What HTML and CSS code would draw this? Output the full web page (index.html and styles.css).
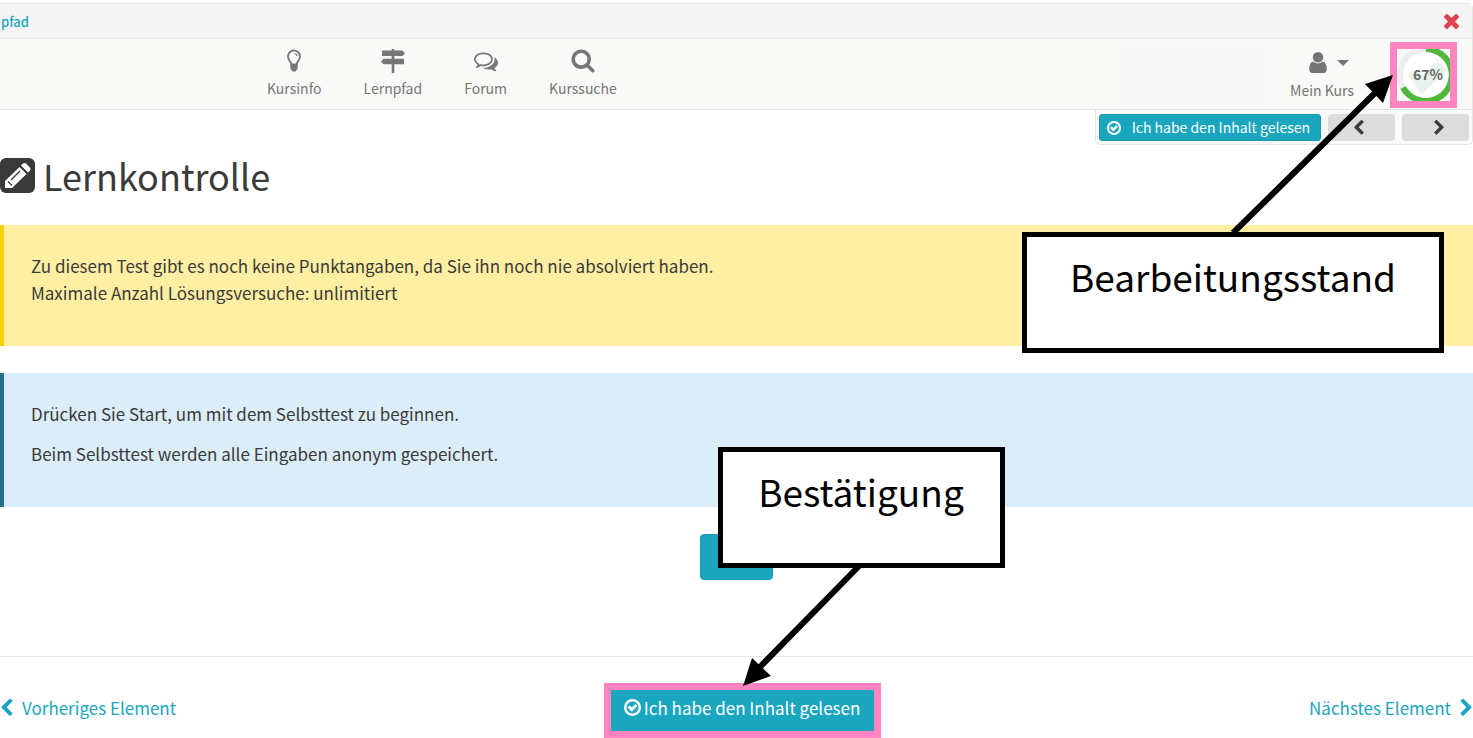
FILE: index.html
```html
<!DOCTYPE html>
<html lang="de">
<head>
<meta charset="utf-8">
<title>Lernkontrolle</title>
<link rel="stylesheet" href="styles.css">
</head>
<body>
<svg class="defs" aria-hidden="true">
  <symbol id="check" viewBox="128 128 1536 1536"><path d="M1299 813l-422 422q-19 19-45 19t-45-19l-294-294q-19-19-19-45t19-45l102-102q19-19 45-19t45 19l147 147 275-275q19-19 45-19t45 19l102 102q19 19 19 45t-19 45zm141 83q0-148-73-273t-198-198-273-73-273 73-198 198-73 273 73 273 198 198 273 73 273-73 198-198 73-273zm224 0q0 209-103 385.500t-279.500 279.500-385.500 103-385.500-103-279.500-279.500-103-385.500 103-385.500 279.500-279.500 385.500-103 385.500 103 279.500 279.500 103 385.500z"/></symbol>
  <symbol id="left" viewBox="384 70 1100 1580"><path d="M1427 301l-531 531 531 531q19 19 19 45t-19 45l-166 166q-19 19-45 19t-45-19l-742-742q-19-19-19-45t19-45l742-742q19-19 45-19t45 19l166 166q19 19 19 45t-19 45z"/></symbol>
</svg>

<header class="top">
  <div class="crumbs">
    <a href="#">pfad</a>
    <button class="close" aria-label="Schließen"><svg viewBox="302 366 1188 1188"><path d="M1490 1322q0 40-28 68l-136 136q-28 28-68 28t-68-28l-294-294-294 294q-28 28-68 28t-68-28l-136-136q-28-28-28-68t28-68l294-294-294-294q-28-28-28-68t28-68l136-136q28-28 68-28t68 28l294 294 294-294q28-28 68-28t68 28l136 136q28 28 28 68t-28 68l-294 294 294 294q28 28 28 68z"/></svg></button>
  </div>
  <div class="bar">
    <nav class="tools">
      <a href="#"><svg viewBox="0 0 24 24"><path d="M9.300 15.500C9.300 12.500 6 11.500 6 7.500a6 6 0 0 1 12 0c0 4-3.300 5-3.300 8" fill="none" stroke="currentColor" stroke-width="1.800"/><path d="M8.300 14.500h7.400v5q0 1-1 1.300L13.500 22.500h-3L9.300 20.800q-1-.3-1-1.300z"/><path d="M12.500 4.800q2.400.2 2.600 2.500" fill="none" stroke="currentColor" stroke-width="1.100"/></svg>Kursinfo</a>
      <a href="#"><svg viewBox="0 0 24 24"><path d="M10.700 0h2.600v1.500h8.200L24 4.300l-2.500 2.800h-8.200v2.600H23v5.600h-9.700V24h-2.600v-8.700H2.500L0 12.500l2.500-2.800h8.200V7.100H1V1.500h9.700z"/></svg>Lernpfad</a>
      <a href="#"><svg viewBox="0 0 1792 1792"><path d="M704 384q-153 0-286 52t-211.500 141-78.500 191q0 82 53 158t149 132l97 56-35 84q34-20 62-39l44-31 53 10q78 14 153 14 153 0 286-52t211.500-141 78.500-191-78.500-191-211.500-141-286-52zm0-128q191 0 353.500 68.500t256.500 186.500 94 257-94 257-256.500 186.500-353.500 68.500q-86 0-176-16-124 88-278 128-36 9-86 16h-3q-11 0-20.500-8t-11.500-21q-1-3-1-6.500t.5-6.500 2-6l2.500-5 3.500-5.500 4-5 4.500-5 4-4.500q5-6 23-25t26-29.500 22.500-29 25-38.500 20.500-44q-124-72-195-177t-71-224q0-139 94-257t256.500-186.500 353.500-68.500zm822 1169q10 24 20.500 44t25 38.500 22.500 29 26 29.500 23 25q1 1 4 4.500t4.500 5 4 5 3.500 5.500l2.500 5 2 6 .5 6.500-1 6.500q-3 14-13 22t-22 7q-50-7-86-16-154-40-278-128-90 16-176 16-271 0-472-132 58 4 88 4 161 0 309-45t264-129q125-92 192-212t67-254q0-77-23-152 129 71 204 178t75 230q0 120-71 224.500t-195 176.500z"/></svg>Forum</a>
      <a href="#"><svg viewBox="32 96 1728 1728"><path d="M1216 832q0-185-131.500-316.500t-316.500-131.500-316.500 131.500-131.500 316.500 131.500 316.500 316.500 131.500 316.500-131.500 131.500-316.500zm512 832q0 52-38 90t-90 38q-54 0-90-38l-343-342q-179 124-399 124-143 0-273.500-55.500t-225-150-150-225-55.500-273.500 55.500-273.500 150-225 225-150 273.500-55.500 273.500 55.500 225 150 150 225 55.500 273.500q0 220-124 399l343 343q37 37 37 90z"/></svg>Kurssuche</a>
    </nav>
    <div class="blank"></div>
    <button class="mine">
      <span class="mine-icons"><svg class="user" viewBox="256 128 1280 1536"><path d="M1536 1399q0 109-62.500 187t-150.500 78h-854q-88 0-150.500-78t-62.500-187q0-85 8.500-160.500t31.500-152 58.500-131 94-89 134.500-34.500q131 128 313 128t313-128q76 0 134.500 34.500t94 89 58.500 131 31.500 152 8.500 160.500zm-256-887q0 159-112.500 271.500t-271.500 112.500-271.500-112.500-112.500-271.500 112.500-271.500 271.500-112.500 271.500 112.500 112.500 271.500z"/></svg><svg class="caret" viewBox="0 0 12 6"><path d="M0 0h12L6 6z"/></svg></span>
      Mein Kurs
    </button>
    <div class="progress">
      <svg viewBox="0 0 53 52" role="img" aria-label="67%">
        <circle cx="29" cy="26" r="26" fill="#fff" stroke="#eee" stroke-width="6"/>
        <path d="M11 26l6-6 8 7 15-15 10 9-25 24z" fill="#e9f2e8"/>
        <path d="M29 0A26 26 0 1 1 6 38.500" fill="none" stroke="#4fb93a" stroke-width="6"/>
        <text x="31" y="31" text-anchor="middle">67%</text>
      </svg>
    </div>
  </div>
</header>

<div class="pager">
  <button class="done small"><svg><use href="#check"/></svg>Ich habe den Inhalt gelesen</button>
  <button class="step back" aria-label="Zurück"><svg><use href="#left"/></svg></button>
  <button class="step next" aria-label="Weiter"><svg class="flip"><use href="#left"/></svg></button>
</div>

<main>
  <h1><svg viewBox="0 0 35 35"><rect width="35" height="35" rx="6"/><path d="M5 30v-7L19.500 9l7 7L12 30zM21 7.500l2-2q1.500-1 3 0l4 4q1 1.500 0 3l-2 2z" fill="#fff"/><path d="M8 23.500l4 4M11 22l9-9" fill="none" stroke="#3a3a3a" stroke-width="1.300"/></svg>Lernkontrolle</h1>
  <section class="note warn">
    <p>Zu diesem Test gibt es noch keine Punktangaben, da Sie ihn noch nie absolviert haben.<br>Maximale Anzahl Lösungsversuche: unlimitiert</p>
  </section>
  <section class="note info">
    <p>Drücken Sie Start, um mit dem Selbsttest zu beginnen.</p>
    <p>Beim Selbsttest werden alle Eingaben anonym gespeichert.</p>
  </section>
  <button class="start">Start</button>
</main>

<footer>
  <a href="#"><svg><use href="#left"/></svg>Vorheriges Element</a>
  <button class="done large"><svg><use href="#check"/></svg>Ich habe den Inhalt gelesen</button>
  <a href="#">Nächstes Element<svg class="flip"><use href="#left"/></svg></a>
</footer>

<svg class="arrow arrow-status" viewBox="0 0 170 170" aria-hidden="true"><path d="M8 168L152 26" stroke="#000" stroke-width="6"/><path d="M168 10l-28 9 18 19z"/></svg>
<div class="callout status">Bearbeitungsstand</div>
<svg class="arrow arrow-confirm" viewBox="0 0 130 130" aria-hidden="true"><path d="M122 5L19 110" stroke="#000" stroke-width="6"/><path d="M5 126l9-28 19 18z"/></svg>
<div class="callout confirm">Bestätigung</div>
</body>
</html>
```
FILE: styles.css
```css
* { box-sizing: border-box; }

body {
  position: relative;
  margin: 0;
  padding-top: 3px;
  background: #fff;
  color: #3a3a3a;
  font: 17px/27px "Noto Sans CJK SC", "Noto Sans", sans-serif;
}

svg { fill: currentColor; flex: none; }
.defs { position: absolute; width: 0; height: 0; }
a { color: #1ba6c0; text-decoration: none; }
button { font: inherit; border: 0; padding: 0; background: none; color: inherit; }
p { margin: 0; }
.flip { transform: scaleX(-1); }

.top {
  border: 1px solid #e6e6e6;
  border-width: 1px 1px 1px 0;
  border-radius: 0 5px 0 0;
}

.crumbs {
  display: flex;
  justify-content: space-between;
  align-items: center;
  height: 35px;
  padding: 0 13px 0 1px;
  background: #f5f5f5;
  border-bottom: 1px solid #e6e6e6;
  font-size: 13px;
  font-weight: 500;
}
.close { display: flex; color: #dc444f; }
.close svg { width: 15px; height: 15px; }

.bar {
  display: flex;
  align-items: stretch;
  height: 70px;
  padding: 3px 15px 1px 267px;
  background: #f9f9f7;
  color: #757575;
  font-size: 14px;
}
.tools { display: flex; gap: 42px; }
.tools a {
  display: flex;
  flex-direction: column;
  align-items: center;
  padding-top: 7px;
  line-height: 20px;
  gap: 5px;
  color: #777;
}
.tools svg { width: 24px; height: 24px; }
.blank { width: 145px; margin-left: auto; background: #f7f7f7; }
.mine {
  display: flex;
  flex-direction: column;
  align-items: center;
  gap: 7px;
  width: 66px;
  margin: 0 35px 0 24px;
  padding-top: 10px;
  line-height: 20px;
  white-space: nowrap;
}
.mine-icons { display: flex; align-items: center; gap: 10px; margin-left: 14px; }
.user { width: 18px; height: 21px; }
.caret { width: 12px; height: 6px; }

.progress { width: 67px; height: 66px; border: 7px solid #ff85c1; background: #f9f9f7; }
.progress svg { display: block; width: 53px; height: 52px; }
.progress text { font-size: 14px; font-weight: 700; fill: #666; }

.pager {
  display: flex;
  gap: 7px;
  width: fit-content;
  margin-left: auto;
  padding: 4px 3px 3px;
  border: 1px solid #e6e6e6;
  border-top: 0;
  border-radius: 0 0 5px 5px;
  background: #f9f9f7;
}
.done { display: flex; align-items: center; background: #1ba6c0; color: #fff; }
.small { gap: 11px; height: 27px; padding: 0 10px 0 7px; border-radius: 3px; font-size: 14px; border: 1px solid #159ab3; }
.small svg { width: 14px; height: 14px; }
.step {
  display: flex;
  justify-content: center;
  align-items: center;
  width: 67px;
  border-radius: 4px;
  background: #dcdcdc;
}
.back { padding-right: 6px; }
.next { padding-left: 6px; }
.step svg { width: 10px; height: 15px; }

h1 {
  display: flex;
  align-items: center;
  gap: 8px;
  margin: 0;
  padding: 3px 0 23px;
  font-size: 36px;
  font-weight: 400;
  line-height: 54px;
}
h1 svg { width: 35px; height: 35px; }

.note { margin-bottom: 27px; padding: 27px 27px 40px; border-left: 4px solid; }
.note p + p { margin-top: 13px; }
.warn { background: #ffefa3; border-color: #f7d000; }
.info { background: #daedf9; border-color: #2a6c8c; }

.start {
  display: block;
  height: 46px;
  margin: 0 auto;
  padding: 0 16px;
  border: 1px solid #159ab3;
  border-radius: 4px;
  background: #1ba6c0;
  color: #fff;
}

footer {
  display: flex;
  justify-content: space-between;
  align-items: center;
  margin-top: 76px;
  padding: 26px 1px 0;
  border-top: 1px solid #e6e6e6;
}
footer a { display: flex; align-items: center; gap: 9px; padding-bottom: 7px; }
footer a svg { width: 12px; height: 17px; }
.large { gap: 3px; height: 55px; padding: 0 14px 7px 13px; border: 7px solid #ff85c1; }
.large svg { width: 17px; height: 17px; }

/* Annotations drawn over the page */
.callout {
  position: absolute;
  height: 121px;
  padding-top: 12px;
  border: 5px solid #000;
  background: #fff;
  color: #000;
  font-size: 37px;
  line-height: 54px;
  text-align: center;
}
.status { top: 232px; right: 29px; width: 422px; }
.confirm { top: 447px; left: calc(50% - 19px); width: 287px; }
.arrow { position: absolute; fill: #000; }
.arrow-status { top: 65px; right: 78px; width: 170px; height: 170px; }
.arrow-confirm { top: 560px; left: calc(50% + 1px); width: 130px; height: 130px; }
```
